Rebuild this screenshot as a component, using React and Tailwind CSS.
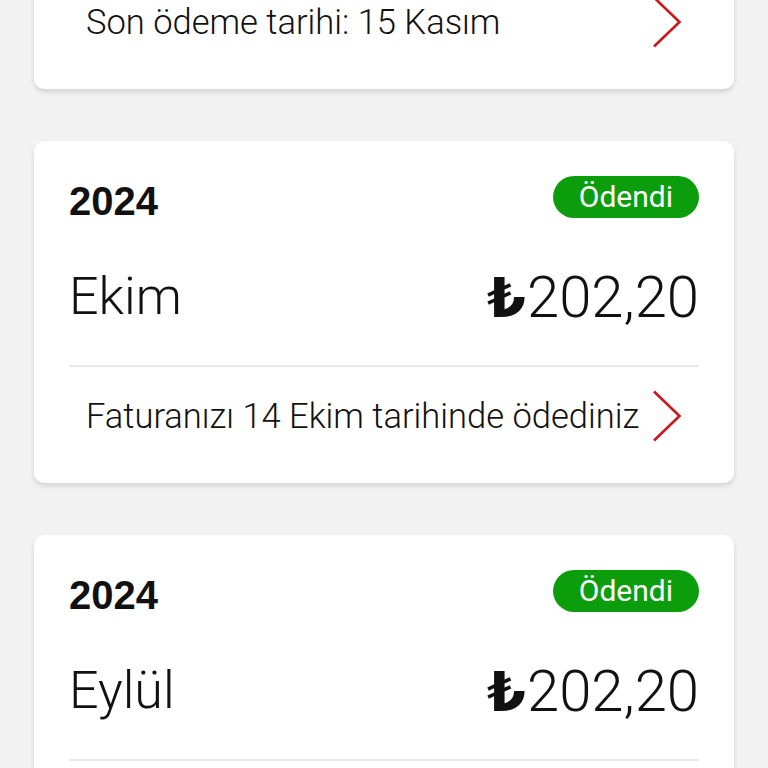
import React from "react";

const bills = [
  { year: "2024", month: "Kasım", amount: "202,20", status: "Ödenmedi", note: "Son ödeme tarihi: 15 Kasım" },
  { year: "2024", month: "Ekim", amount: "202,20", status: "Ödendi", note: "Faturanızı 14 Ekim tarihinde ödediniz" },
  { year: "2024", month: "Eylül", amount: "202,20", status: "Ödendi", note: "Faturanızı 14 Eylül tarihinde ödediniz" },
];

function Chevron() {
  return (
    <svg width="30" height="52" viewBox="0 0 30 52" fill="none" className="shrink-0">
      <path d="M2 1.5 L27.5 26 L2 50.5" stroke="#cc1818" strokeWidth="2.6" strokeLinejoin="miter" />
    </svg>
  );
}

function BillCard({ bill }) {
  return (
    <div className="bg-white rounded-[10px] shadow-[0_3px_5px_rgba(0,0,0,0.13)] px-[35px] pt-[35px] font-['Roboto',sans-serif] text-[#111]">
      <div className="flex items-center justify-between h-[42px]">
        <span className="font-['Liberation_Sans',sans-serif] font-bold text-[40px] leading-none pt-[7px]">{bill.year}</span>
        <span className="h-[42px] px-[26px] rounded-full bg-[#0c9d0c] text-white flex items-center text-[30px] leading-none">
          {bill.status}
        </span>
      </div>
      <div className="flex items-center justify-between mt-[51px] h-[56px]">
        <span className="text-[52px] leading-none font-light">{bill.month}</span>
        <span className="text-[58px] leading-none font-light flex items-baseline">
          <span className="font-['DejaVu_Sans',sans-serif] font-bold text-[56px] mr-[1px]">₺</span>
          {bill.amount}
        </span>
      </div>
      <div className="mt-[40px] h-[2px] bg-[#e8e8e8]" />
      <div className="flex items-center justify-between px-[17px] pt-[23px] pb-[41px]">
        <span className="text-[34.5px] leading-none font-light whitespace-nowrap">{bill.note}</span>
        <Chevron />
      </div>
    </div>
  );
}

export default function App() {
  return (
    <div className="bg-[#f2f2f2] overflow-hidden h-[768px]">
      <div className="mx-[34px] -mt-[253px] flex flex-col gap-[52px]">
        {bills.map((b, i) => (
          <BillCard key={i} bill={b} />
        ))}
      </div>
    </div>
  );
}
